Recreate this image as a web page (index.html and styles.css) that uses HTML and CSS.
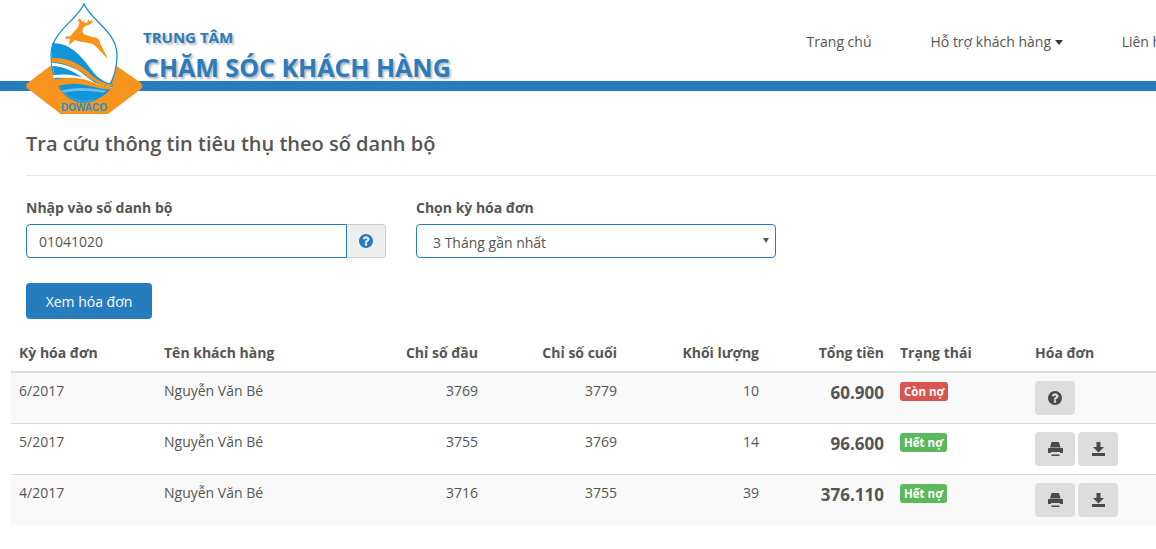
FILE: index.html
```html
<!DOCTYPE html>
<html lang="en">

<head>
    <meta charset="UTF-8">
    <title>Tra cứu thông tin tiêu thụ</title>
    <link rel="stylesheet" href="styles.css">
</head>

<body>
    <header class="site-header">
        <svg class="logo" viewBox="0 0 390 360" width="130" height="120">
            <path d="M90 198 L22 250 Q15 258 22 265 L122 342 L264 342 L362 268 Q372 258 362 248 L290 198 Z" fill="#f7941e"/>
            <path d="M192 12 C170 62 93 95 93 165 C93 245 135 306 192 306 C252 306 291 240 291 165 C291 95 213 62 192 12 Z" fill="#fff" stroke="#1d92d3" stroke-width="4"/>
            <path d="M96 130 C150 125 190 175 215 210 C232 235 255 248 280 252 C268 282 232 303 192 303 C135 303 96 245 96 165 Z" fill="#0f95d9"/>
            <path d="M95 174 C150 172 185 195 215 225 C232 242 255 250 278 254 L276 259 C250 258 225 248 205 232 C180 210 145 188 95 186 Z" fill="#f7941e"/>
            <path d="M95 188 C150 192 180 212 205 234 C225 252 250 260 275 261 L274 264 C240 264 215 250 195 238 C170 220 140 200 96 197 Z" fill="#fff"/>
            <path d="M98 226 C135 220 170 224 200 238 C225 250 250 258 275 262 L274 264 C235 262 215 250 190 242 C160 232 130 232 100 234 Z" fill="#fff"/>
            <path d="M103 240 C140 230 180 232 210 244 C235 254 255 258 274 262 L272 268 C240 268 215 258 190 254 C165 250 135 250 112 260 Z" fill="#f7941e"/>
            <path d="M124 272 C160 260 210 262 258 272 L251 278 C210 272 170 270 132 278 Z" fill="#6fbde6"/>
            <path d="M180 56 L172 60 L178 66 C178 78 172 86 165 92 C158 98 155 104 152 108 L135 110 L138 116 L150 116 L146 136 L153 130 L165 120 C182 128 205 126 222 134 C235 145 250 165 264 176 C256 160 248 146 240 130 C240 118 232 114 222 112 C210 108 195 106 188 98 C186 90 190 82 196 78 C206 76 214 72 222 64 L212 66 L218 58 L208 64 L204 58 L202 68 L192 68 L194 60 L188 66 Z" fill="#f7941e"/>
            <text class="logo-text" x="192" y="332" text-anchor="middle">DOWACO</text>
        </svg>
        <div class="brand">
            <div class="brand-small">TRUNG TÂM</div>
            <div class="brand-big">CHĂM SÓC KHÁCH HÀNG</div>
        </div>
        <nav class="main-nav">
            <a href="#">Trang chủ</a>
            <a href="#">Hỗ trợ khách hàng <span class="caret"></span></a>
            <a href="#">Liên hệ</a>
        </nav>
    </header>
    <div class="blue-bar"></div>

    <main class="content">
        <h1 class="page-title">Tra cứu thông tin tiêu thụ theo số danh bộ</h1>

        <div class="search-form">
            <div class="field field-code">
                <label>Nhập vào số danh bộ</label>
                <div class="input-group">
                    <input class="form-control" type="text" value="01041020">
                    <span class="addon">
                        <svg class="icon icon-help" viewBox="128 128 1536 1536"><path d="M1024 1376v-192q0-14-9-23t-23-9h-192q-14 0-23 9t-9 23v192q0 14 9 23t23 9h192q14 0 23-9t9-23zm256-672q0-88-55.5-163t-138.5-116-170-41q-243 0-371 213-15 24 8 42l132 100q7 6 19 6 16 0 25-12 53-68 86-92 34-24 86-24 48 0 85.5 26t37.5 59q0 38-20 61t-68 45q-63 28-115.5 86.5t-52.5 125.5v36q0 14 9 23t23 9h192q14 0 23-9t9-23q0-19 21.5-49.5t54.5-49.5q32-18 49-28.5t46-35 44.5-48 28-60.5 12.5-81zm384 192q0 209-103 385.5t-279.5 279.5-385.5 103-385.5-103-279.5-279.5-103-385.5 103-385.5 279.5-279.5 385.5-103 385.5 103 279.5 279.5 103 385.5z"/></svg>
                    </span>
                </div>
            </div>
            <div class="field field-period">
                <label>Chọn kỳ hóa đơn</label>
                <div class="select-box">3 Tháng gần nhất<span class="select-arrow"></span></div>
            </div>
        </div>

        <button class="btn-primary">Xem hóa đơn</button>
    </main>

    <table class="bills">
        <thead>
            <tr>
                <th>Kỳ hóa đơn</th>
                <th>Tên khách hàng</th>
                <th class="num">Chỉ số đầu</th>
                <th class="num">Chỉ số cuối</th>
                <th class="num">Khối lượng</th>
                <th class="num">Tổng tiền</th>
                <th>Trạng thái</th>
                <th>Hóa đơn</th>
            </tr>
        </thead>
        <tbody>
            <tr>
                <td>6/2017</td>
                <td>Nguyễn Văn Bé</td>
                <td class="num">3769</td>
                <td class="num">3779</td>
                <td class="num">10</td>
                <td class="num total">60.900</td>
                <td><span class="label label-red">Còn nợ</span></td>
                <td class="actions">
                    <button class="btn-icon"><svg class="icon" viewBox="128 128 1536 1536"><path d="M1024 1376v-192q0-14-9-23t-23-9h-192q-14 0-23 9t-9 23v192q0 14 9 23t23 9h192q14 0 23-9t9-23zm256-672q0-88-55.5-163t-138.5-116-170-41q-243 0-371 213-15 24 8 42l132 100q7 6 19 6 16 0 25-12 53-68 86-92 34-24 86-24 48 0 85.5 26t37.5 59q0 38-20 61t-68 45q-63 28-115.5 86.5t-52.5 125.5v36q0 14 9 23t23 9h192q14 0 23-9t9-23q0-19 21.5-49.5t54.5-49.5q32-18 49-28.5t46-35 44.5-48 28-60.5 12.5-81zm384 192q0 209-103 385.5t-279.5 279.5-385.5 103-385.5-103-279.5-279.5-103-385.5 103-385.5 279.5-279.5 385.5-103 385.5 103 279.5 279.5 103 385.5z"/></svg></button>
                </td>
            </tr>
            <tr>
                <td>5/2017</td>
                <td>Nguyễn Văn Bé</td>
                <td class="num">3755</td>
                <td class="num">3769</td>
                <td class="num">14</td>
                <td class="num total">96.600</td>
                <td><span class="label label-green">Hết nợ</span></td>
                <td class="actions">
                    <button class="btn-icon"><svg class="icon icon-print" viewBox="0 0 15 14"><path d="M3.500 0H11L12.500 5.500H2zM0.500 6H14.500Q15 6 15 6.500V11H12V10H3V11H0V6.500Q0 6 0.500 6zM3.500 12.500H11.500V14H3.500z"/></svg></button>
                    <button class="btn-icon"><svg class="icon icon-save" viewBox="0 0 13 14"><path d="M4.500 0H8.500V5H12L6.500 10.500L1 5H4.500zM0 11H13V14H0z"/></svg></button>
                </td>
            </tr>
            <tr>
                <td>4/2017</td>
                <td>Nguyễn Văn Bé</td>
                <td class="num">3716</td>
                <td class="num">3755</td>
                <td class="num">39</td>
                <td class="num total">376.110</td>
                <td><span class="label label-green">Hết nợ</span></td>
                <td class="actions">
                    <button class="btn-icon"><svg class="icon icon-print" viewBox="0 0 15 14"><path d="M3.500 0H11L12.500 5.500H2zM0.500 6H14.500Q15 6 15 6.500V11H12V10H3V11H0V6.500Q0 6 0.500 6zM3.500 12.500H11.500V14H3.500z"/></svg></button>
                    <button class="btn-icon"><svg class="icon icon-save" viewBox="0 0 13 14"><path d="M4.500 0H8.500V5H12L6.500 10.500L1 5H4.500zM0 11H13V14H0z"/></svg></button>
                </td>
            </tr>
        </tbody>
    </table>
</body>

</html>
```

FILE: styles.css
```css
html, body {
    margin: 0;
    height: 549px;
    overflow: hidden;
}

body {
    font-family: 'Open Sans', sans-serif;
    font-size: 14px;
    color: #555;
    background: #fff;
}

.site-header {
    position: relative;
    display: flex;
    height: 81px;
    padding-left: 143px;
}

.logo {
    position: absolute;
    left: 20px;
    top: 0;
    z-index: 2;
}

.logo-text {
    font-family: 'Liberation Sans', sans-serif;
    font-size: 30px;
    font-weight: 700;
    fill: #1d92d3;
}

.brand {
    color: #2a7cbd;
    font-weight: 700;
    text-shadow: 2px 2px 2px #bbb;
    padding-top: 26px;
}

.brand-small {
    font-size: 15px;
    line-height: 22px;
}

.brand-big {
    font-size: 25px;
    line-height: 34px;
    margin-top: 2px;
    white-space: nowrap;
}

.main-nav {
    display: flex;
    margin-left: auto;
    gap: 59px;
    padding-top: 32px;
    margin-right: -13px;
    white-space: nowrap;
}

.main-nav a {
    color: #555;
    text-decoration: none;
    line-height: 20px;
}

.caret {
    display: inline-block;
    border-top: 5px solid #333;
    border-left: 4px solid transparent;
    border-right: 4px solid transparent;
    vertical-align: 2px;
}

.blue-bar {
    height: 10px;
    background: #277cbe;
}

.content {
    padding: 0 0 0 26px;
}

.page-title {
    margin: 0;
    padding: 39px 0 18px;
    font-size: 20px;
    line-height: 27px;
    font-weight: 600;
    color: #555;
    border-bottom: 1px solid #e5e5e5;
}

.search-form {
    display: flex;
    gap: 30px;
    margin-top: 22px;
}

.field label {
    display: block;
    font-weight: 700;
    line-height: 20px;
    margin-bottom: 6px;
}

.field-code {
    width: 360px;
}

.field-period {
    width: 360px;
}

.input-group {
    display: flex;
    height: 34px;
}

.form-control {
    flex: 1;
    min-width: 0;
    box-sizing: border-box;
    height: 34px;
    padding: 0 12px;
    font: inherit;
    color: #555;
    border: 1px solid #277cbe;
    border-radius: 4px 0 0 4px;
    outline: none;
}

.addon {
    display: flex;
    align-items: center;
    justify-content: center;
    box-sizing: border-box;
    width: 39px;
    background: #eee;
    border: 1px solid #ccc;
    border-left: none;
    border-radius: 0 4px 4px 0;
}

.icon {
    width: 14px;
    height: 14px;
    fill: #4a4a4a;
}

.icon-help {
    fill: #277cbe;
}

.icon-print {
    width: 15px;
}

.icon-save {
    width: 13px;
}

.select-box {
    position: relative;
    box-sizing: border-box;
    height: 34px;
    padding-left: 16px;
    line-height: 35px;
    border: 1px solid #277cbe;
    border-radius: 4px;
}

.select-arrow {
    position: absolute;
    right: 6px;
    top: 13px;
    border-top: 5px solid #555;
    border-left: 3px solid transparent;
    border-right: 3px solid transparent;
}

.btn-primary {
    display: block;
    width: 126px;
    height: 36px;
    margin-top: 25px;
    padding: 0;
    font: inherit;
    color: #fff;
    background: #277cbe;
    border: none;
    border-radius: 4px;
}

.bills {
    width: 1152px;
    margin: 18px 0 0 11px;
    border-collapse: collapse;
    table-layout: fixed;
}

.bills th:nth-child(1) { width: 145px; }
.bills th:nth-child(2) { width: 194px; }
.bills th:nth-child(3) { width: 136px; }
.bills th:nth-child(4) { width: 139px; }
.bills th:nth-child(5) { width: 142px; }
.bills th:nth-child(6) { width: 125px; }
.bills th:nth-child(7) { width: 135px; }

.bills th {
    box-sizing: border-box;
    height: 35px;
    padding: 0 8px 3px;
    font-weight: 700;
    text-align: left;
    border-bottom: 2px solid #ddd;
}

.bills td {
    height: 50px;
    padding: 8px;
    box-sizing: border-box;
    vertical-align: top;
    line-height: 20px;
    border-bottom: 1px solid #ddd;
}

.bills tbody tr:nth-child(odd) {
    background: #f9f9f9;
}

.bills tbody tr:last-child td {
    border-bottom: none;
}

.bills .num {
    text-align: right;
}

.bills .total {
    font-size: 17px;
    font-weight: 700;
    line-height: 24px;
}

.label {
    display: inline-block;
    padding: 0 4px;
    font-size: 11.5px;
    font-weight: 700;
    line-height: 19px;
    color: #fff;
    border-radius: 3px;
    vertical-align: top;
    margin-top: 1px;
}

.label-red {
    background: #d9534f;
}

.label-green {
    background: #5cb85c;
}

.bills .actions {
    font-size: 12px;
    white-space: nowrap;
}

.btn-icon {
    display: inline-flex;
    align-items: center;
    justify-content: center;
    width: 40px;
    height: 34px;
    padding: 0;
    background: #ddd;
    border: none;
    border-radius: 4px;
    vertical-align: top;
}
```
